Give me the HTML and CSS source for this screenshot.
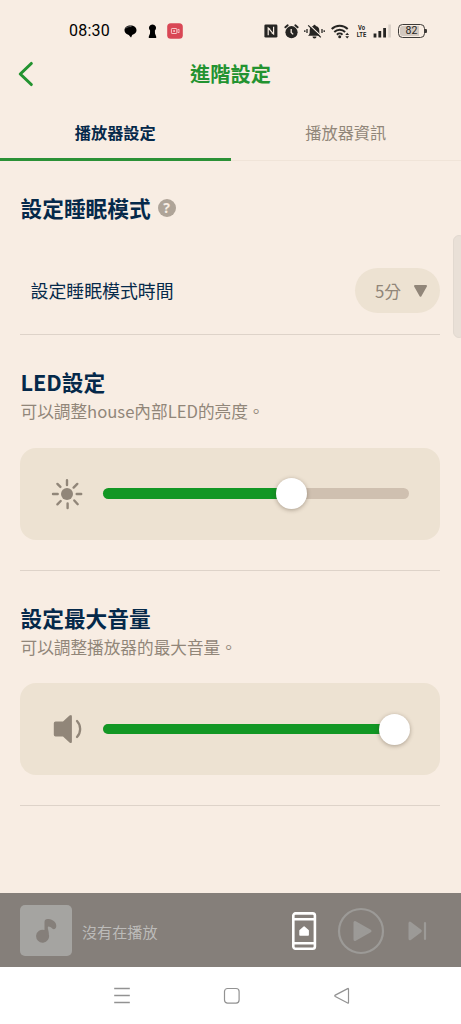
FILE: index.html
```html
<!DOCTYPE html>
<html lang="zh-Hant">
<head>
<meta charset="utf-8">
<title>進階設定</title>
<meta name="viewport" content="width=device-width, initial-scale=1">
<link rel="stylesheet" href="styles.css">
</head>
<body>
<div class="app">
  <div class="status">
    <div class="status-left">
      <span class="clock">08:30</span>
      <svg class="ic-chat" width="13" height="13" viewBox="0 0 13 13"><path d="M6.500.5C3 .5.5 2.500.5 5.200c0 2.200 1.500 3.800 3.700 4.500 1 .3 1.300 1.200 2.800 2.800.6-.7.800-2.200 1.500-2.800C11 9 12.500 7.400 12.500 5.300 12.500 2.500 10 .5 6.500.5z" fill="#000"/><path d="M1.600 3.400C3 1.900 5 1.300 7.500 1.600" stroke="#777" stroke-width=".8" fill="none"/></svg>
      <svg class="ic-pawn" width="9" height="15" viewBox="0 0 9 15"><path d="M4.500.4a3.500 3.500 0 0 1 3 5.400L6.900 6.600l.1 3 1.200 2.800V14H.8v-1.600L2 9.600l.1-3-.6-.8a3.500 3.500 0 0 1 3-5.400z" fill="#000"/></svg>
      <svg class="ic-rec" width="16" height="16" viewBox="0 0 16 16"><rect x=".2" y=".2" width="15.600" height="15.600" rx="3.600" fill="#d94755"/><rect x="4.400" y="5.500" width="5.400" height="5" rx=".7" fill="none" stroke="#fbd5d5" stroke-width=".9"/><circle cx="7.100" cy="8" r=".9" fill="#fbd5d5"/><path d="M10.200 7.200l1.800-1v3.600l-1.800-1" fill="none" stroke="#fbd5d5" stroke-width=".8"/></svg>
    </div>
    <div class="status-right">
      <svg width="14" height="14" viewBox="0 0 14 14"><rect x=".4" y=".5" width="13" height="13" rx="1.300" fill="#262523"/><path d="M4.200 11.300V4l2 1.500M9.600 2.700V10l-2-1.500M4.600 4.300l4.800 5.500" fill="none" stroke="#f8ede3" stroke-width="1.200"/></svg>
      <svg class="ic-alarm" width="15" height="15" viewBox="0 0 15 15"><circle cx="7.500" cy="8.200" r="6.100" fill="#262523"/><path d="M1.400 3.300L3.700 1.300M13.600 3.300L11.300 1.300" stroke="#262523" stroke-width="1.900" stroke-linecap="round"/><path d="M7.200 5v3.500l2 1.900" stroke="#f8ede3" stroke-width="1.300" fill="none"/></svg>
      <svg class="ic-bell" width="21" height="15" viewBox="0 0 21 15"><path d="M4 11.800c1.800-1.300 1.700-2.800 1.700-5.300A4.600 4.600 0 0 1 9.300 2a1.200 1.200 0 0 1 2.400 0 4.600 4.600 0 0 1 3.600 4.500c0 2.500-.1 4 1.700 5.300zM8.500 12.400h4a2 2 0 0 1-4 0z" fill="#262523"/><path d="M5.500 1l12 11.400" stroke="#f8ede3" stroke-width="1.200"/><path d="M4.200 1.400l12.600 12M3 5v4M.8 6.300v1.800M18 5v4M20.200 6.300v1.800" stroke="#262523" stroke-width="1.300"/></svg>
      <svg class="ic-wifi" width="19" height="15" viewBox="0 0 19 15"><g fill="none" stroke="#262523" stroke-width="1.900"><path d="M.7 5a11.300 11.300 0 0 1 16 0"/><path d="M3.300 8a7.500 7.500 0 0 1 10.800 0"/><path d="M5.900 10.700a4 4 0 0 1 5.600 0"/></g><circle cx="8.700" cy="12.800" r="1.500" fill="#262523"/><path d="M14.300 11l1.900-2.300 1.900 2.300zM14.300 12.200h3.800l-1.900 2.300z" fill="#262523"/></svg>
      <div class="volte"><span>Vo</span><span>LTE</span></div>
      <svg class="ic-signal" width="19" height="14" viewBox="0 0 19 14"><path d="M2 9.500v4M6.800 7v6.500M11.600 4v9.500" stroke="#262523" stroke-width="2.800"/><path d="M16.600.5v13" stroke="#d9d0c7" stroke-width="2.600"/></svg>
      <div class="battery"><span>82</span></div>
    </div>
  </div>

  <header class="header">
    <svg class="back" width="16" height="26" viewBox="0 0 16 26"><path d="M13.300 2.500L2.300 13l11 10.500" fill="none" stroke="#239330" stroke-width="3.100" stroke-linecap="round" stroke-linejoin="round"/></svg>
    <h1 class="title">進階設定</h1>
  </header>

  <nav class="tabs">
    <div class="tab tab-active">播放器設定</div>
    <div class="tab">播放器資訊</div>
  </nav>

  <main class="content">
    <section class="section sleep">
      <h2 class="heading">設定睡眠模式<span class="help">?</span></h2>
      <div class="row">
        <span class="row-label">設定睡眠模式時間</span>
        <div class="select"><span>5分</span><svg width="15" height="14" viewBox="0 0 15 14"><path d="M2 2h11L7.500 11.700z" fill="#918679" stroke="#918679" stroke-width="2" stroke-linejoin="round"/></svg></div>
      </div>
    </section>

    <section class="section">
      <h2 class="heading">LED設定</h2>
      <p class="sub">可以調整house內部LED的亮度。</p>
      <div class="card">
        <svg class="card-icon" width="32" height="32" viewBox="0 0 32 32"><circle cx="16" cy="16" r="6" fill="#918679"/><path d="M16 2.200v4.800M16.600 25.500v4.500M2 16h4.700M25.700 16h4.500M6.400 5.900l3 3M26.300 5.900l-3.700 3.700M6.400 26.300l3.300-3.300M23.300 22.500l3.400 3.700" stroke="#918679" stroke-width="2.400" stroke-linecap="round"/></svg>
        <div class="slider"><div class="fill" style="width:188.500px"></div><div class="thumb"></div></div>
      </div>
    </section>

    <section class="section">
      <h2 class="heading">設定最大音量</h2>
      <p class="sub">可以調整播放器的最大音量。</p>
      <div class="card">
        <svg class="card-icon" width="32" height="32" viewBox="0 0 32 32"><path d="M4.600 8.500H12L18.500 2.600Q20.900 1 20.900 3.500V28.500Q20.900 31 18.500 29.400L12 23.500H4.600Q2.800 23.500 2.800 21.700V10.300Q2.800 8.500 4.600 8.500z" fill="#918679"/><path d="M26 8c4.200 4.300 4.200 11.500 0 16" fill="none" stroke="#918679" stroke-width="2.300" stroke-linecap="round"/></svg>
        <div class="slider"><div class="fill" style="width:292px"></div><div class="thumb"></div></div>
      </div>
    </section>
  </main>

  <div class="scrollbar"></div>

  <footer class="player">
    <div class="cover"><svg width="22" height="25" viewBox="0 0 22 25"><path d="M9.500 12V4C9.500 1.500 11 .7 13.500 1 18 1.500 21.300 4 21.300 8c0 2-1 3.200-2.600 3.200-1.700 0-2.600-2.700-5-2.700-.7 0-1 .5-.9 1.500.3 2 1.200 4 1 6.300a6.500 6.500 0 1 1-4.300-4.300z" fill="#857f7a"/></svg></div>
    <span class="track">沒有在播放</span>
    <svg class="ic-device" width="26" height="40" viewBox="0 0 26 40"><rect x="2.300" y="2.400" width="21.600" height="35.400" rx="2.200" fill="none" stroke="#fff" stroke-width="2.600"/><path d="M2 8.300h21.800M2 32.200h21.800" stroke="#fff" stroke-width="2.600"/><path d="M13.100 16.200l4 3.400v4.400H9.100v-4.400z" fill="#fff" stroke="#fff" stroke-width="1.600" stroke-linejoin="round"/></svg>
    <svg class="ic-play" width="48" height="48" viewBox="0 0 48 48"><circle cx="24" cy="24" r="22" fill="none" stroke="#9c9a97" stroke-width="2.200"/><path d="M18 15.500v17L33 24z" fill="#9c9a97" stroke="#9c9a97" stroke-width="3" stroke-linejoin="round"/></svg>
    <svg class="ic-next" width="20" height="22" viewBox="0 0 20 22"><path d="M3 3.200v15.600L13.300 11z" fill="#9c9a97" stroke="#9c9a97" stroke-width="3" stroke-linejoin="round"/><path d="M18 3v16" stroke="#9c9a97" stroke-width="2.200" stroke-linecap="round"/></svg>
  </footer>

  <div class="navbar">
    <svg width="18" height="18" viewBox="0 0 18 18"><path d="M1.200 1.500h15.600M1.200 8.500h15.600M1.200 15.500h15.600" stroke="#929292" stroke-width="1.400"/></svg>
    <svg width="18" height="18" viewBox="0 0 18 18"><rect x="1.500" y="1.500" width="14.600" height="14.600" rx="3" fill="none" stroke="#929292" stroke-width="1.200"/></svg>
    <svg width="18" height="18" viewBox="0 0 18 18"><path d="M15.500 2v13.600q0 .8-.8.400L2.300 9.500q-1-.7 0-1.400L14.700 1.600q.8-.4.800.4z" fill="none" stroke="#929292" stroke-width="1.200"/></svg>
  </div>
</div>
</body>
</html>
```
FILE: styles.css
```css
* { box-sizing: border-box; }
body {
  margin: 0;
  background: #f8ede3;
  color: #05294a;
  font-family: "Noto Sans CJK TC", sans-serif;
}
h1, h2, p { margin: 0; }
svg { display: block; flex: none; }
.app {
  position: relative;
  display: flex;
  flex-direction: column;
  width: 461px;
  height: 1024px;
  overflow: hidden;
}

.status {
  display: flex;
  justify-content: space-between;
  height: 50px;
  padding: 12px 36px 0 69px;
}
.status-left, .status-right { display: flex; align-items: center; height: 38px; }
.clock {
  width: 42px;
  margin-right: 13px;
  font: 400 16px/20px Roboto, sans-serif;
  color: #000;
  letter-spacing: .2px;
}
.ic-pawn { margin-left: 11px; }
.ic-rec { margin-left: 10px; }
.ic-alarm { margin-left: 6px; }
.ic-bell { margin-left: 5px; }
.ic-wifi { margin-left: 6px; }
.volte {
  display: flex;
  flex-direction: column;
  align-items: center;
  width: 11px;
  margin-left: 6px;
  transform: scaleX(.78);
  font: 700 7.500px/7px Roboto, sans-serif;
  color: #262523;
}
.volte span { height: 7px; line-height: 7px; }
.ic-signal { margin-left: 6px; }
.battery {
  position: relative;
  width: 27px;
  height: 14px;
  margin-left: 6px;
  padding: 1px;
  border: 1px solid #3d3a37;
  border-radius: 4.500px;
}
.battery::after {
  content: "";
  position: absolute;
  right: -3px;
  top: 4px;
  width: 2px;
  height: 4px;
  background: #3d3a37;
  border-radius: 0 1px 1px 0;
}
.battery span {
  display: block;
  height: 10px;
  border-radius: 2.500px;
  background: linear-gradient(90deg, #d3c9c0 82%, transparent 82%);
  text-align: center;
  font: 10.500px/10.500px Roboto, sans-serif;
  color: #262523;
}

.header {
  display: grid;
  grid-template-columns: 40px 1fr 40px;
  align-items: center;
  height: 48px;
}
.back { margin-left: 18px; }
.title {
  text-align: center;
  font-size: 20.200px;
  line-height: 28px;
  font-weight: 700;
  color: #239330;
}

.tabs { display: flex; height: 63px; border-bottom: 1px solid #f0e4d8; }
.tab {
  flex: 1;
  height: 63px;
  padding-top: 22px;
  text-align: center;
  font-size: 16.200px;
  line-height: 24px;
  color: #918679;
}
.tab-active { font-weight: 700; color: #05294a; border-bottom: 3px solid #2b9136; }

.content { flex: 1; padding: 0 21px 0 20px; }
.section { height: 235.500px; padding-top: 31px; border-bottom: 1px solid #ded3c9; }
.sleep { height: 174px; }
.heading {
  display: flex;
  align-items: center;
  height: 32px;
  padding-left: .5px;
  font-size: 21.700px;
  line-height: 32px;
  font-weight: 700;
}
.help {
  width: 18px;
  height: 18px;
  margin-left: 7px;
  border-radius: 50%;
  background: #afa498;
  color: #f8ede3;
  text-align: center;
  font: 700 14px/18px "Noto Sans", sans-serif;
}
.row {
  display: flex;
  justify-content: space-between;
  align-items: center;
  height: 45px;
  margin-top: 44px;
  padding-left: 10.500px;
}
.row-label { height: 28px; font-size: 17.900px; line-height: 26px; }
.select {
  display: flex;
  align-items: center;
  justify-content: space-between;
  width: 85px;
  height: 45px;
  padding: 0 12px 0 20px;
  border-radius: 23px;
  background: #ede2d2;
  color: #918679;
  font-size: 16.800px;
}
.sub {
  margin-top: 1px;
  height: 24px;
  padding-left: .5px;
  font-size: 16.650px;
  line-height: 24px;
  color: #918679;
  white-space: nowrap;
}
.card {
  display: flex;
  align-items: center;
  height: 92px;
  margin-top: 24.500px;
  padding: 0 31px;
  border-radius: 16px;
  background: #ede2d2;
}
.slider {
  display: flex;
  align-items: center;
  flex: 1;
  height: 10.500px;
  margin-left: 19.500px;
  border-radius: 6px;
  background: #cfc0b0;
}
.fill { height: 10.500px; border-radius: 6px 0 0 6px; background: #129724; }
.thumb {
  flex: none;
  width: 31px;
  height: 31px;
  margin-left: -15.500px;
  border-radius: 50%;
  background: #fff;
  box-shadow: 0 1px 4px rgba(60, 45, 30, .38);
}

.scrollbar {
  position: absolute;
  right: -4px;
  top: 235px;
  width: 12px;
  height: 103px;
  border: 1px solid #e2d9d0;
  border-radius: 6px;
  background: #e9e0d7;
}

.player {
  display: flex;
  align-items: center;
  height: 74px;
  padding: 1px 0 0 20px;
  background: #857f7a;
}
.cover {
  display: grid;
  place-items: center;
  width: 52px;
  height: 51px;
  border-radius: 5px;
  background: #a5a4a1;
}
.track {
  width: 209px;
  margin-left: 10px;
  font-size: 15.100px;
  line-height: 22px;
  color: #bcbbb9;
}
.ic-play { margin-left: 20px; }
.ic-next { margin-left: 22px; }

.navbar {
  display: flex;
  justify-content: center;
  gap: 92px;
  height: 57px;
  padding: 20px 0 0 2px;
  background: #fff;
}
```
